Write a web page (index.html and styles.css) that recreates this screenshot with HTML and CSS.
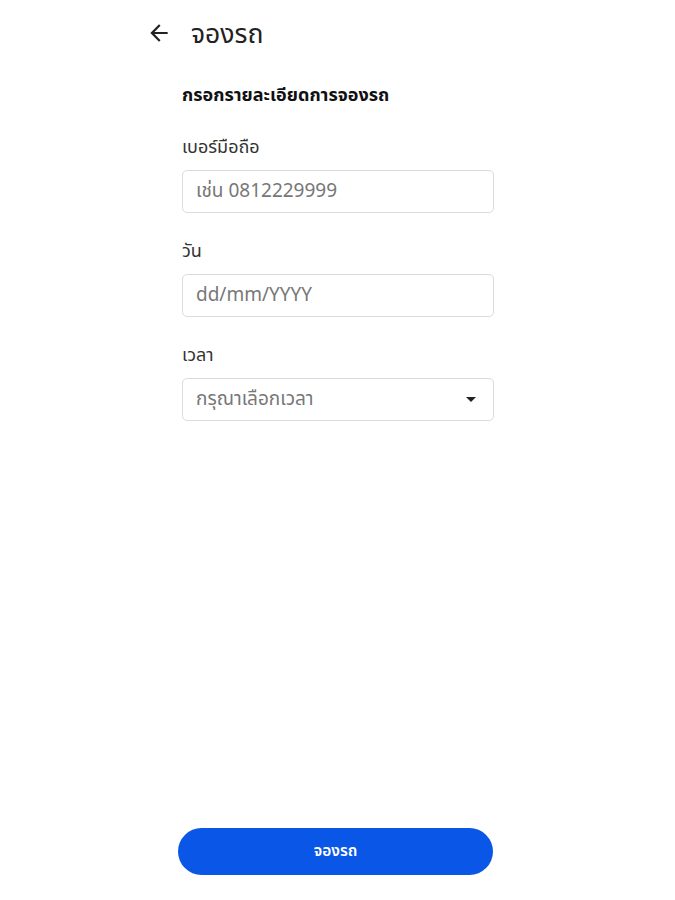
FILE: index.html
```html
<!DOCTYPE html>
<html lang="th">
<head>
<meta charset="utf-8">
<title>จองรถ</title>
<link rel="stylesheet" href="styles.css">
</head>
<body>
<div class="page">
  <header class="topbar">
    <svg class="back" width="26" height="26" viewBox="0 0 24 24" aria-hidden="true"><path d="M20 11H7.83l5.59-5.59L12 4l-8 8 8 8 1.41-1.41L7.83 13H20v-2z" fill="#222"/></svg>
    <h1 class="title">จองรถ</h1>
  </header>
  <main class="form">
    <h2 class="section">กรอกรายละเอียดการจองรถ</h2>
    <div class="field">
      <label class="label">เบอร์มือถือ</label>
      <div class="input"><span class="ph">เช่น 0812229999</span></div>
    </div>
    <div class="field">
      <label class="label">วัน</label>
      <div class="input"><span class="ph">dd/mm/YYYY</span></div>
    </div>
    <div class="field">
      <label class="label">เวลา</label>
      <div class="input select"><span class="ph">กรุณาเลือกเวลา</span><span class="caret"></span></div>
    </div>
  </main>
  <div class="footer">
    <button class="submit">จองรถ</button>
  </div>
</div>
</body>
</html>
```
FILE: styles.css
```css
* { box-sizing: border-box; }
html, body { margin: 0; padding: 0; background: #fff; }
body { font-family: "Noto Sans Thai", "Noto Sans", "DejaVu Sans", sans-serif; color: #222; }
.page { width: 675px; height: 900px; display: flex; flex-direction: column; }
.topbar { display: flex; align-items: center; padding: 16px 0 0 146px; height: 50px; }
.back { display: block; }
.title { margin: 3px 0 0 19px; font-size: 26.5px; font-weight: 400; color: #222; line-height: 34px; }
.form { padding: 34px 0 0 182px; width: 494px; flex: 1; }
.section { margin: 0 0 28px; font-size: 18px; font-weight: 700; color: #111; line-height: 24px; }
.field { margin-bottom: 27px; }
.label { display: block; font-size: 18px; color: #333; line-height: 24px; margin-bottom: 10px; }
.input { height: 43px; width: 312px; border: 1px solid #dcdcdc; border-radius: 5px; display: flex; align-items: center; padding: 0 13px; }
.ph { font-size: 19px; color: #777; }
.select { justify-content: space-between; }
.caret { width: 0; height: 0; border-left: 5px solid transparent; border-right: 5px solid transparent; border-top: 5px solid #222; margin-right: 4px; }
.footer { padding: 0 0 25px 178px; }
.submit { width: 315px; height: 47px; border: none; border-radius: 24px; background: #0a56e6; color: #fff; font-family: inherit; font-size: 15.5px; font-weight: 600; }
```
